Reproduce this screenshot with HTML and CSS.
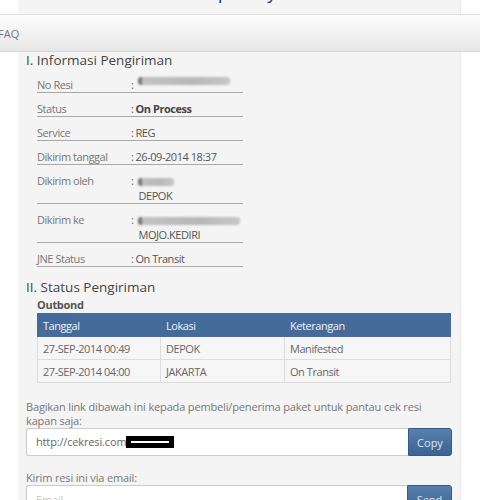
FILE: index.html
```html
<!DOCTYPE html>
<html lang="id">
<head>
<meta charset="utf-8">
<title>Cek Resi</title>
<link rel="stylesheet" href="styles.css">
</head>
<body>
<div class="sheet top">
  <h1 class="title">Cek Resi Terpercaya</h1>
</div>
<nav class="navbar">
  <a class="nav-link" href="#">FAQ</a>
</nav>
<main class="sheet content">
  <h2 class="section-title">I. Informasi Pengiriman</h2>
  <div class="info">
    <div class="info-row"><span class="label">No Resi</span><span class="colon">:</span><span class="value"><span class="blur blur-resi"></span></span></div>
    <div class="info-row"><span class="label">Status</span><span class="colon">:</span><span class="value"><strong>On Process</strong></span></div>
    <div class="info-row"><span class="label">Service</span><span class="colon">:</span><span class="value">REG</span></div>
    <div class="info-row"><span class="label">Dikirim tanggal</span><span class="colon">:</span><span class="value">26-09-2014 18:37</span></div>
    <div class="info-row"><span class="label">Dikirim oleh</span><span class="colon">:</span><span class="value"><span class="line"><span class="blur blur-name"></span></span><span class="line indent">DEPOK</span></span></div>
    <div class="info-row"><span class="label">Dikirim ke</span><span class="colon">:</span><span class="value"><span class="line"><span class="blur blur-addr"></span></span><span class="line indent">MOJO.KEDIRI</span></span></div>
    <div class="info-row"><span class="label">JNE Status</span><span class="colon">:</span><span class="value">On Transit</span></div>
  </div>

  <h2 class="section-title second">II. Status Pengiriman</h2>
  <div class="subhead">Outbond</div>
  <table class="tracking">
    <colgroup><col class="c1"><col class="c2"><col class="c3"></colgroup>
    <thead>
      <tr><th>Tanggal</th><th>Lokasi</th><th>Keterangan</th></tr>
    </thead>
    <tbody>
      <tr><td>27-SEP-2014 00:49</td><td>DEPOK</td><td>Manifested</td></tr>
      <tr><td>27-SEP-2014 04:00</td><td>JAKARTA</td><td>On Transit</td></tr>
    </tbody>
  </table>

  <p class="hint share-hint">Bagikan link dibawah ini kepada pembeli/penerima paket untuk pantau cek resi<br>kapan saja:</p>
  <div class="input-group">
    <div class="field">http://cekresi.com/<span class="redact"></span></div>
    <button class="btn" type="button">Copy</button>
  </div>

  <p class="hint mail-hint">Kirim resi ini via email:</p>
  <div class="input-group">
    <input class="field" type="text" placeholder="Email">
    <button class="btn btn-send" type="button">Send</button>
  </div>
</main>
</body>
</html>
```
FILE: styles.css
```css
html, body {
  margin: 0;
  padding: 0;
  background: #ffffff;
  overflow: hidden;
}

body {
  font-family: "Open Sans", "DejaVu Sans", sans-serif;
  font-size: 11px;
  letter-spacing: -0.45px;
  color: #666;
}

.sheet {
  box-sizing: border-box;
  width: 443px;
  margin-left: 18px;
  background: #f4f4f4;
  border-right: 1px solid #e9e9e9;
}

.top {
  height: 14px;
  overflow: hidden;
}

.title {
  margin: -20px 0 0;
  padding-left: 92px;
  font-size: 19px;
  line-height: 24px;
  font-weight: 400;
  letter-spacing: 0;
  color: #263f68;
  white-space: nowrap;
}

.navbar {
  box-sizing: border-box;
  height: 38px;
  border-top: 1px solid #dedede;
  border-bottom: 1px solid #d6d6d6;
  background: linear-gradient(#fdfdfd, #e6e6e6);
}

.nav-link {
  display: block;
  margin-left: -2px;
  padding-top: 2px;
  line-height: 34px;
  font-size: 11px;
  letter-spacing: 0;
  color: #777;
  text-decoration: none;
}

.content {
  padding: 0 8px 40px;
}

.section-title {
  margin: 0;
  font-size: 13.5px;
  line-height: 16px;
  font-weight: 400;
  letter-spacing: 0;
  color: #444;
}

.section-title.second {
  margin-top: 12px;
}

.info {
  margin: 1px 0 0 11px;
  width: 206px;
}

.info-row {
  display: flex;
  padding-top: 8px;
  line-height: 15px;
  border-bottom: 1px solid #a9a9a9;
}

.label {
  flex: none;
  width: 94px;
  color: #777;
}

.colon {
  margin-right: 2px;
  color: #666;
}

.value {
  display: flex;
  flex-direction: column;
  color: #555;
}

.value strong {
  font-weight: 700;
  color: #444;
}

.line.indent {
  padding-left: 3px;
}

.blur {
  display: inline-block;
  height: 8px;
  margin-left: 3px;
  vertical-align: -1px;
  border-radius: 3px;
  filter: blur(1.3px);
  background: linear-gradient(90deg, #777 0 4px, #c2c2c2 4px, #b8b8b8 60%, #c6c6c6);
}

.blur-resi { width: 92px; }
.blur-name { width: 36px; }
.blur-addr { width: 102px; }

.subhead {
  margin: 2px 0 0 11px;
  line-height: 15px;
  font-weight: 700;
  letter-spacing: -0.3px;
  color: #555;
}

.tracking {
  margin: 1px 0 0 11px;
  width: 413px;
  border-collapse: collapse;
  table-layout: fixed;
  font-size: 11px;
}

.tracking .c1 { width: 123px; }
.tracking .c2 { width: 124px; }
.tracking .c3 { width: 166px; }

.tracking th,
.tracking td {
  padding: 4px 5px 3px;
  line-height: 15px;
  text-align: left;
  font-weight: 400;
  white-space: nowrap;
}

.tracking th {
  background: #446b99;
  color: #eef2f7;
  border: 1px solid #446b99;
}

.tracking th + th {
  border-left-color: #7592b6;
}

.tracking td {
  background: #f6f6f6;
  color: #666;
  border: 1px solid #dddddd;
}

.hint {
  margin: 0;
  font-size: 11px;
  letter-spacing: -0.15px;
  line-height: 14px;
  color: #777;
}

.share-hint {
  margin-top: 17px;
}

.mail-hint {
  margin-top: 15px;
}

.input-group {
  display: flex;
  width: 426px;
  height: 28px;
}

.field {
  box-sizing: border-box;
  flex: 1;
  min-width: 0;
  height: 28px;
  margin: 0;
  padding: 0 9px;
  border: 1px solid #cccccc;
  border-right: none;
  border-radius: 3px 0 0 3px;
  background: #ffffff;
  font-family: inherit;
  font-size: 11px;
  letter-spacing: -0.15px;
  line-height: 26px;
  color: #666;
  outline: none;
}

.field::placeholder {
  color: #c8c8c8;
}

.redact {
  display: inline-block;
  width: 48px;
  height: 12px;
  margin-left: -4px;
  vertical-align: -2px;
  background: linear-gradient(#ffffff, #ffffff) center / 38px 2px no-repeat, #000000;
}

.btn {
  box-sizing: border-box;
  flex: none;
  width: 44px;
  height: 28px;
  padding: 0;
  border: 1px solid #34598a;
  border-radius: 0 3px 3px 0;
  background: linear-gradient(#5880ae, #3b6291);
  font-family: inherit;
  font-size: 11px;
  letter-spacing: 0;
  color: #dfe6ef;
}

.btn-send {
  width: 45px;
}
```
